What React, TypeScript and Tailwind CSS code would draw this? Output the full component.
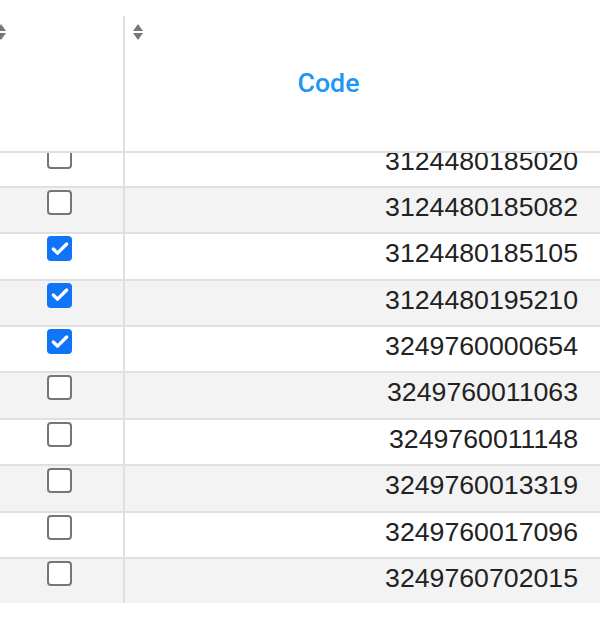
import { Check } from 'lucide-react';

interface Row {
  code: string;
  selected: boolean;
}

const rows: Row[] = [
  { code: '3124480185020', selected: false },
  { code: '3124480185082', selected: false },
  { code: '3124480185105', selected: true },
  { code: '3124480195210', selected: true },
  { code: '3249760000654', selected: true },
  { code: '3249760011063', selected: false },
  { code: '3249760011148', selected: false },
  { code: '3249760013319', selected: false },
  { code: '3249760017096', selected: false },
  { code: '3249760702015', selected: false },
];

function SortIcon() {
  return (
    <svg width="10" height="16" viewBox="0 0 10 16" className="text-[#777]">
      <path d="M5 0 L10 7 L0 7 Z" fill="currentColor" />
      <path d="M0 9 L10 9 L5 16 Z" fill="currentColor" />
    </svg>
  );
}

function Checkbox({ checked }: { checked: boolean }) {
  if (checked) {
    return (
      <span className="flex h-[25px] w-[25px] items-center justify-center rounded-[4px] bg-[#0f74f5]">
        <Check size={20} strokeWidth={4} className="text-white" />
      </span>
    );
  }
  return <span className="block h-[25px] w-[25px] rounded-[4px] border-2 border-[#767676] bg-white" />;
}

export default function App() {
  return (
    <div className="w-[600px] h-[620px] bg-white pt-[16px] overflow-hidden font-['Liberation_Sans',Arial,sans-serif]">
      <div className="w-[612px] -ml-[12px]">
        {/* Header */}
        <div className="flex h-[137px] border-b-2 border-[#e0e0e0]">
          <div className="relative w-[137px] shrink-0 border-r-2 border-[#e0e0e0]">
            <div className="absolute left-[8px] top-[8px]">
              <SortIcon />
            </div>
          </div>
          <div className="relative flex flex-1 items-center justify-center pr-[68px]">
            <div className="absolute left-[8px] top-[8px]">
              <SortIcon />
            </div>
            <span className="font-['Roboto',sans-serif] text-[26.7px] font-medium text-[#2196f3]">Code</span>
          </div>
        </div>

        {/* Body */}
        <div className="h-[450px] overflow-hidden">
          <div className="-mt-[13.4px]">
            {rows.map((row, i) => (
              <div
                key={row.code}
                className={`flex h-[46.375px] border-t-2 border-[#e0e0e0] ${i % 2 === 1 ? 'bg-[#f3f3f3]' : 'bg-white'}`}
              >
                <div className="w-[137px] shrink-0 border-r-2 border-[#e0e0e0] pl-[59px] pt-[2px]">
                  <Checkbox checked={row.selected} />
                </div>
                <div className="flex-1 pr-[22px] pt-[4px] text-right text-[26.7px] leading-[30px] text-[#222]">
                  {row.code}
                </div>
              </div>
            ))}
          </div>
        </div>
      </div>
    </div>
  );
}
